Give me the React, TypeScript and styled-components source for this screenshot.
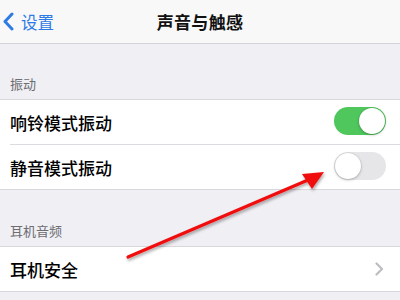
import React from "react";
import styled, { createGlobalStyle } from "styled-components";

const Global = createGlobalStyle`
  html, body { margin: 0; padding: 0; }
  body {
    width: 400px; height: 300px; overflow: hidden;
    background: #efeff4;
    font-family: "Noto Sans CJK SC", "Noto Sans", sans-serif;
  }
`;

const Page = styled.div`
  position: relative;
  width: 400px;
  height: 300px;
  background: #efeff4;
  display: flex;
  flex-direction: column;
`;

const NavBar = styled.div`
  height: 43px;
  background: #f8f8f9;
  border-bottom: 1px solid #d4d4d8;
  display: grid;
  grid-template-columns: 1fr auto 1fr;
  align-items: center;
`;

const Back = styled.div`
  display: flex;
  align-items: center;
  gap: 7px;
  padding-left: 3px;
  color: #2f7be5;
  font-size: 16.5px;
`;

const Title = styled.div`
  font-size: 17px;
  font-weight: 600;
  color: #111;
  letter-spacing: 0.3px;
`;

const SectionHeader = styled.div<{ $top: number }>`
  padding: ${(p) => p.$top}px 0 6px 10px;
  font-size: 13px;
  color: #6d6d72;
  line-height: 18px;
`;

const Group = styled.div`
  background: #fff;
  border-top: 1px solid #d8d8dc;
  border-bottom: 1px solid #d8d8dc;
`;

const Row = styled.div<{ $divider?: boolean }>`
  height: 44px;
  display: flex;
  align-items: center;
  justify-content: space-between;
  padding-right: 14px;
  margin-left: 10px;
  border-bottom: ${(p) => (p.$divider ? "1px solid #dcdce0" : "none")};
  font-size: 17px;
  font-weight: 500;
  color: #000;
`;

const Toggle = styled.div<{ $on: boolean }>`
  width: 52px;
  height: 28px;
  border-radius: 14px;
  box-sizing: border-box;
  background: ${(p) => (p.$on ? "#4fc75d" : "#e6e6e8")};
  position: relative;
  margin-top: -2px;
  &::after {
    content: "";
    position: absolute;
    top: 1px;
    left: ${(p) => (p.$on ? "25px" : "1px")};
    width: 26px;
    height: 26px;
    border-radius: 50%;
    background: #fff;
    box-shadow: 0 1px 3px rgba(0,0,0,0.25), 0 0 0 0.5px rgba(0,0,0,0.08);
  }
`;

const Chevron = styled.svg`
  width: 9px;
  height: 14px;
  margin-right: 2px;
`;

const Arrow = styled.svg`
  position: absolute;
  left: 0;
  top: 0;
  pointer-events: none;
`;

export default function App() {
  return (
    <>
      <Global />
      <Page>
        <NavBar>
          <Back>
            <svg width="11" height="19" viewBox="0 0 11 19">
              <path d="M9 2 L2 9.5 L9 17" fill="none" stroke="#2f7be5" strokeWidth="3" strokeLinecap="round" strokeLinejoin="round" />
            </svg>
            <span>设置</span>
          </Back>
          <Title>声音与触感</Title>
          <div />
        </NavBar>
        <SectionHeader $top={31}>振动</SectionHeader>
        <Group>
          <Row $divider>
            <span>响铃模式振动</span>
            <Toggle $on />
          </Row>
          <Row>
            <span>静音模式振动</span>
            <Toggle $on={false} />
          </Row>
        </Group>
        <SectionHeader $top={32}>耳机音频</SectionHeader>
        <Group>
          <Row>
            <span>耳机安全</span>
            <Chevron viewBox="0 0 9 14">
              <path d="M1.5 1.5 L7 7 L1.5 12.5" fill="none" stroke="#bdbdc2" strokeWidth="2.2" strokeLinecap="round" strokeLinejoin="round" />
            </Chevron>
          </Row>
        </Group>
        <Arrow width="400" height="300" viewBox="0 0 400 300">
          <defs>
            <filter id="sh" x="-20%" y="-20%" width="140%" height="140%">
              <feDropShadow dx="1" dy="2" stdDeviation="1.5" floodColor="#000" floodOpacity="0.35" />
            </filter>
          </defs>
          <g filter="url(#sh)">
            <line x1="128" y1="257" x2="308" y2="180" stroke="#f01010" strokeWidth="3.2" strokeLinecap="round" />
            <polygon points="324,172 302,174 312,189" fill="#f01010" />
          </g>
        </Arrow>
      </Page>
    </>
  );
}
